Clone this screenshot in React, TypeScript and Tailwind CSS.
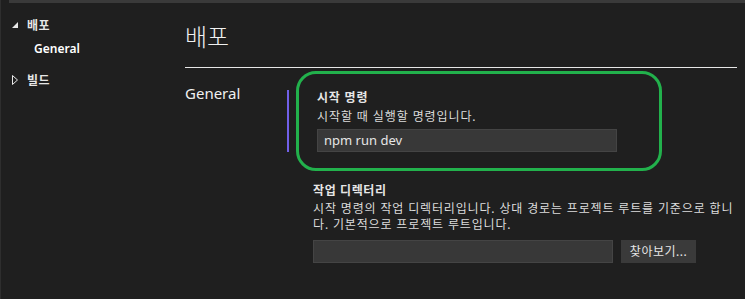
import React from "react";

function Caret({ open }: { open: boolean }) {
  if (open) {
    return (
      <svg width="6" height="6" viewBox="0 0 6 6" className="shrink-0">
        <polygon points="6,0 6,6 0,6" fill="#e8e8e8" />
      </svg>
    );
  }
  return (
    <svg width="6" height="10" viewBox="0 0 6 10" className="shrink-0">
      <polygon points="0.5,0.5 5.5,5 0.5,9.5" fill="none" stroke="#e8e8e8" strokeWidth="1" />
    </svg>
  );
}

export default function App() {
  return (
    <div className="relative flex h-[299px] w-[745px] flex-col overflow-hidden border-l border-[#2e2e2e] bg-[#1f1f1f] font-['Noto_Sans','Noto_Sans_CJK_KR',sans-serif] text-[#e6e6e6]">
      <div className="ml-[8px] h-[3px] shrink-0 bg-[#3a3a3a]" />

      <div className="flex flex-1">
        {/* sidebar */}
        <div className="flex w-[184px] shrink-0 flex-col pl-[11px] pt-[14px] text-[12px]">
          <div className="flex h-[16px] items-center gap-[9px]">
            <Caret open />
            <span className="font-['Noto_Sans_CJK_KR',sans-serif] font-semibold leading-none tracking-[0.5px]">배포</span>
          </div>
          <div className="ml-[22px] mt-[8px] h-[16px] font-semibold leading-[16px] text-white">General</div>
          <div className="mt-[15px] flex h-[16px] items-center gap-[9px]">
            <Caret open={false} />
            <span className="font-['Noto_Sans_CJK_KR',sans-serif] font-semibold leading-none tracking-[0.5px]">빌드</span>
          </div>
        </div>

        {/* main */}
        <div className="flex flex-1 flex-col pr-[8px]">
          <h1 className="mt-[17px] h-[32px] font-['Noto_Sans_CJK_KR',sans-serif] text-[24px] font-light leading-[32px] text-[#f0f0f0]">배포</h1>
          <div className="mt-[15px] h-px bg-[#e6e6e6]" />

          <div className="mt-[15px] flex">
            <div className="w-[102px] shrink-0 text-[15px] leading-[20px] text-[#f0f0f0]">General</div>
            <div className="flex flex-col">
              <div className="mt-[7px] flex">
                <div className="w-[2px] bg-[#7160e8]" />
                <div className="flex flex-col pl-[28px]">
                  <div className="text-[12px] font-bold leading-[15px] tracking-[0.8px]">시작 명령</div>
                  <div className="mt-[4px] text-[12px] leading-[15px] tracking-[0.9px] text-[#dcdcdc]">시작할 때 실행할 명령입니다.</div>
                  <div className="mt-[5px] flex h-[23px] w-[300px] items-center border border-[#444444] bg-[#383838] px-[6px] text-[13px] text-[#e6e6e6]">
                    npm run dev
                  </div>
                </div>
              </div>

              <div className="mt-[31px] flex flex-col pl-[26px]">
                <div className="text-[12px] font-bold leading-[15px] tracking-[0.6px]">작업 디렉터리</div>
                <div className="mt-[3px] text-[12px] leading-[16px] tracking-[0.85px] text-[#dcdcdc]">
                  시작 명령의 작업 디렉터리입니다. 상대 경로는 프로젝트 루트를 기준으로 합니다. 기본적으로 프로젝트 루트입니다.
                </div>
                <div className="mt-[7px] flex gap-[8px]">
                  <div className="h-[23px] w-[300px] border border-[#444444] bg-[#383838]" />
                  <button className="flex h-[23px] w-[75px] items-center justify-center bg-[#3a3a3a] text-[12px] tracking-[0.5px] text-[#e6e6e6]">
                    찾아보기...
                  </button>
                </div>
              </div>
            </div>
          </div>
        </div>
      </div>

      {/* annotation highlight */}
      <div className="pointer-events-none absolute left-[295px] top-[71px] h-[100px] w-[366px] rounded-[20px] border-[3px] border-[#22b14c]" />
    </div>
  );
}
